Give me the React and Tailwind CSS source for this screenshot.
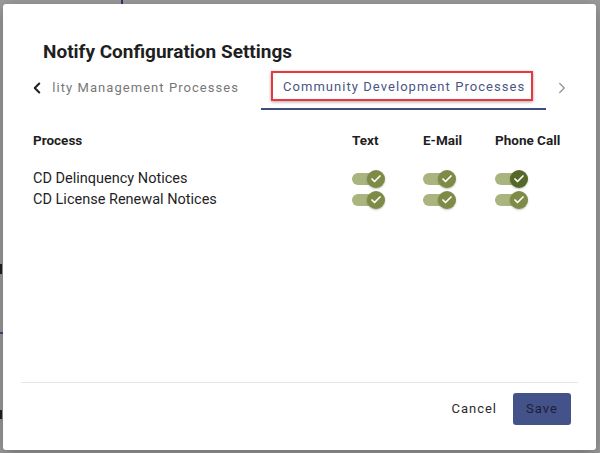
import { Check, ChevronLeft, ChevronRight } from "lucide-react";

const processes = [
  { name: "CD Delinquency Notices", text: true, email: true, phone: true, dark: true },
  { name: "CD License Renewal Notices", text: true, email: true, phone: true, dark: false },
];

const Toggle = ({ dark }) => (
  <div className="relative w-[33px] h-[18px] flex items-center">
    <div className="w-[30px] h-[12px] rounded-full bg-[#a9b47e]" />
    <div
      className={`absolute right-0 top-0 w-[18px] h-[18px] rounded-full flex items-center justify-center shadow-[0_1px_2px_rgba(0,0,0,0.25)] ${
        dark ? "bg-[#56672a]" : "bg-[#7d8b47]"
      }`}
    >
      <Check size={12} strokeWidth={3.5} color="#ffffff" />
    </div>
  </div>
);

const App = () => {
  return (
    <div
      className="relative w-[600px] h-[453px] bg-[#9c9c9c] p-[3px] pt-[4px] pr-[4px] pb-[3px] overflow-hidden"
      style={{ fontFamily: "Roboto, 'Liberation Sans', sans-serif" }}
    >
      {/* bits of the page behind the dialog */}
      <div className="absolute left-[121px] top-0 w-[2px] h-[4px] bg-[#2c3a6b]" />
      <div className="absolute left-0 top-[264px] w-[2px] h-[10px] bg-[#222]" />
      <div className="absolute left-0 top-[332px] w-[3px] h-[2px] bg-[#3f4d7f]" />
      <div className="absolute left-0 top-[410px] w-[2px] h-[9px] bg-[#222]" />

      <div className="relative h-full bg-white rounded-[3px] shadow-[0_4px_16px_rgba(0,0,0,0.3)] flex flex-col">
        <div className="flex-1">
          <h2 className="pl-[40px] pt-[35px] text-[19px] leading-[25px] font-bold text-[#1f1f1f]">
            Notify Configuration Settings
          </h2>

          {/* Tabs */}
          <div className="mt-[2px] mx-[18px] h-[44px] flex">
            <div className="w-[32px] flex items-center justify-center text-[#222]">
              <ChevronLeft size={18} strokeWidth={2.75} />
            </div>
            <div className="flex-1 overflow-hidden">
              <div className="flex h-full ml-[-49px]">
                <div className="h-full px-[22px] flex items-center text-[13px] tracking-[1.05px] text-[#777] whitespace-nowrap">
                  Quality Management Processes
                </div>
                <div className="relative h-full px-[22px] flex items-center text-[13px] tracking-[1.05px] text-[#4a5585] whitespace-nowrap border-b-2 border-[#3f4d7f]">
                  Community Development Processes
                  <div className="absolute left-[10px] right-[14px] top-[5px] bottom-[7px] border-2 border-[#e8383d] shadow-[0_1px_3px_rgba(0,0,0,0.35)]" />
                </div>
              </div>
            </div>
            <div className="w-[32px] flex items-center justify-center text-[#9a9a9a]">
              <ChevronRight size={18} strokeWidth={2} />
            </div>
          </div>

          {/* Table */}
          <div className="mt-[20px] ml-[30px] text-[#1f1f1f]">
            <div className="flex h-[20px] items-center text-[13.5px] font-bold">
              <div className="w-[319px]">Process</div>
              <div className="w-[71px]">Text</div>
              <div className="w-[72px]">E-Mail</div>
              <div>Phone Call</div>
            </div>
            <div className="mt-[19px]">
              {processes.map((p) => (
                <div key={p.name} className="flex h-[20.5px] items-center text-[14.5px]">
                  <div className="w-[319px]">{p.name}</div>
                  <div className="w-[71px]">
                    <Toggle />
                  </div>
                  <div className="w-[72px]">
                    <Toggle />
                  </div>
                  <div>
                    <Toggle dark={p.dark} />
                  </div>
                </div>
              ))}
            </div>
          </div>
        </div>

        {/* Footer */}
        <div className="mx-[18px] border-t border-[#e6e6e6]" />
        <div className="flex justify-end items-center gap-[16px] pr-[25px] pt-[10px] pb-[25px]">
          <button className="text-[13px] tracking-[1px] text-[#2b2b2b]">Cancel</button>
          <button className="w-[58px] h-[32px] rounded-[3px] bg-[#44528a] text-[13px] tracking-[1px] text-[#1c2036]">
            Save
          </button>
        </div>
      </div>
    </div>
  );
};

export default App;
